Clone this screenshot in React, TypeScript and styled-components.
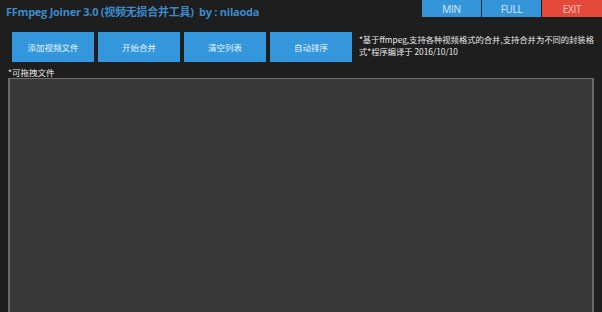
import styled, { createGlobalStyle } from 'styled-components';

const GlobalStyle = createGlobalStyle`
	html, body {
		margin: 0;
		padding: 0;
		background: #1e1e1e;
		overflow: hidden;
	}
	body {
		font-family: "Microsoft YaHei", "Noto Sans CJK SC", "Liberation Sans", sans-serif;
	}
`;

const Window = styled.div`
	width: 602px;
	height: 312px;
	background: #1e1e1e;
	display: flex;
	flex-direction: column;
	overflow: hidden;
`;

const TitleBar = styled.div`
	display: flex;
	justify-content: space-between;
	align-items: flex-start;
	height: 25px;
`;

const Title = styled.h1`
	margin: 0;
	padding: 3px 0 0 6px;
	font-size: 11px;
	font-weight: bold;
	color: #3b8bcc;
	font-family: "Open Sans", "Noto Sans CJK SC", sans-serif;
	letter-spacing: -0.25px;
	white-space: pre;
`;

const WindowButtons = styled.div`
	display: flex;
	gap: 1px;
`;

const WinButton = styled.button<{ danger?: boolean }>`
	width: 59px;
	height: 17px;
	border: none;
	padding: 0;
	background: ${props => props.danger ? '#e5493a' : '#3595d9'};
	color: ${props => props.danger ? '#f4c6c0' : '#d6ebfa'};
	font-family: "Open Sans", sans-serif;
	font-size: 10px;
	letter-spacing: -0.3px;
	${props => props.danger && `
		width: 60px;
	`}
`;

const Toolbar = styled.div`
	display: flex;
	align-items: flex-start;
	padding: 7px 0 0 12px;
	gap: 4px;
	height: 35px;
`;

const ActionButton = styled.button`
	width: 82px;
	height: 30px;
	border: none;
	padding: 0;
	background: #3497dc;
	color: #e8f3fb;
	font-family: "Noto Sans CJK SC", sans-serif;
	font-size: 8.5px;
`;

const Note = styled.p`
	margin: 0 0 0 3px;
	white-space: nowrap;
	font-family: "Noto Sans CJK SC", sans-serif;
	font-size: 8.3px;
	line-height: 12px;
	color: #e6e6e6;
	padding-top: 1px;
`;

const DropLabel = styled.div`
	padding-left: 8px;
	font-family: "Noto Sans CJK SC", sans-serif;
	font-size: 8.5px;
	line-height: 11px;
	color: #e6e6e6;
`;

const FileList = styled.div`
	flex: 1;
	margin: 0 8px 0 8px;
	background: #393939;
	border-top: 1px solid #6e6e6e;
	border-left: 2px solid #6a6a6a;
	border-right: 2px solid #6a6a6a;
`;

const actions = ['添加视频文件', '开始合并', '清空列表', '自动排序'];

export default function App() {
	return (
		<Window>
			<GlobalStyle />
			<TitleBar>
				<Title>{'FFmpeg Joiner 3.0 (视频无损合并工具)  by : nilaoda'}</Title>
				<WindowButtons>
					<WinButton>MIN</WinButton>
					<WinButton>FULL</WinButton>
					<WinButton danger>EXIT</WinButton>
				</WindowButtons>
			</TitleBar>
			<Toolbar>
				{actions.map(label => (
					<ActionButton key={label}>{label}</ActionButton>
				))}
				<Note>
					*基于ffmpeg,支持各种视频格式的合并,支持合并为不同的封装格
					<br />
					式*程序编译于 2016/10/10
				</Note>
			</Toolbar>
			<DropLabel>*可拖拽文件</DropLabel>
			<FileList />
		</Window>
	);
}
